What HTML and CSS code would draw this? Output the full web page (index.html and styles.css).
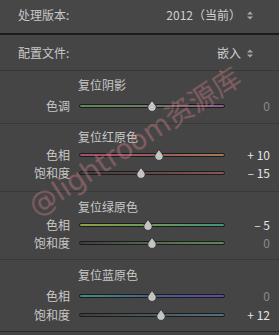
FILE: index.html
```html
<!DOCTYPE html>
<html>
<head>
<meta charset="utf-8">
<link rel="stylesheet" href="styles.css">
</head>
<body>
<div class="panel">
  <div class="row row-top">
    <span class="row-label">处理版本:</span>
    <span class="row-value">2012（当前）<svg class="updown" width="6" height="9" viewBox="0 0 6 9"><path d="M0 3.6 L3 0.4 L6 3.6 Z M0 5.4 L3 8.6 L6 5.4 Z"/></svg></span>
  </div>
  <div class="row row-profile">
    <span class="row-label">配置文件:</span>
    <span class="row-value">嵌入<svg class="updown" width="6" height="9" viewBox="0 0 6 9"><path d="M0 3.6 L3 0.4 L6 3.6 Z M0 5.4 L3 8.6 L6 5.4 Z"/></svg></span>
  </div>

  <div class="section s1">
    <div class="sec-title">复位阴影</div>
    <div class="slider">
      <span class="lbl">色调</span>
      <div class="track t-tone"><svg class="thumb" style="left:calc(50% - 5px)" width="10" height="11" viewBox="0 0 10 11"><path d="M5 0.5 L9 6 A4.2 4.2 0 1 1 1 6 Z"/></svg></div>
      <span class="val zero">0</span>
    </div>
  </div>

  <div class="section s2">
    <div class="sec-title">复位红原色</div>
    <div class="slider">
      <span class="lbl">色相</span>
      <div class="track t-rh"><svg class="thumb" style="left:calc(55% - 5px)" width="10" height="11" viewBox="0 0 10 11"><path d="M5 0.5 L9 6 A4.2 4.2 0 1 1 1 6 Z"/></svg></div>
      <span class="val">+ 10</span>
    </div>
    <div class="slider">
      <span class="lbl">饱和度</span>
      <div class="track t-rs"><svg class="thumb" style="left:calc(42.5% - 5px)" width="10" height="11" viewBox="0 0 10 11"><path d="M5 0.5 L9 6 A4.2 4.2 0 1 1 1 6 Z"/></svg></div>
      <span class="val">– 15</span>
    </div>
  </div>

  <div class="section s3">
    <div class="sec-title">复位绿原色</div>
    <div class="slider">
      <span class="lbl">色相</span>
      <div class="track t-gh"><svg class="thumb" style="left:calc(47.5% - 5px)" width="10" height="11" viewBox="0 0 10 11"><path d="M5 0.5 L9 6 A4.2 4.2 0 1 1 1 6 Z"/></svg></div>
      <span class="val">– 5</span>
    </div>
    <div class="slider">
      <span class="lbl">饱和度</span>
      <div class="track t-gs"><svg class="thumb" style="left:calc(50% - 5px)" width="10" height="11" viewBox="0 0 10 11"><path d="M5 0.5 L9 6 A4.2 4.2 0 1 1 1 6 Z"/></svg></div>
      <span class="val zero">0</span>
    </div>
  </div>

  <div class="section s4">
    <div class="sec-title">复位蓝原色</div>
    <div class="slider">
      <span class="lbl">色相</span>
      <div class="track t-bh"><svg class="thumb" style="left:calc(50% - 5px)" width="10" height="11" viewBox="0 0 10 11"><path d="M5 0.5 L9 6 A4.2 4.2 0 1 1 1 6 Z"/></svg></div>
      <span class="val zero">0</span>
    </div>
    <div class="slider">
      <span class="lbl">饱和度</span>
      <div class="track t-bs"><svg class="thumb" style="left:calc(56% - 5px)" width="10" height="11" viewBox="0 0 10 11"><path d="M5 0.5 L9 6 A4.2 4.2 0 1 1 1 6 Z"/></svg></div>
      <span class="val">+ 12</span>
    </div>
  </div>

  <div class="watermark">@lightroom资源库</div>
</div>
</body>
</html>
```
FILE: styles.css
```css
* { box-sizing: border-box; }
html, body {
  margin: 0;
  padding: 0;
  background: #454545;
}
body {
  width: 279px;
  height: 335px;
  overflow: hidden;
  font-family: "Noto Sans CJK SC", "Noto Sans", sans-serif;
  font-size: 12px;
  color: #c8c8c8;
}
.panel {
  position: relative;
  width: 279px;
  height: 335px;
  background: #454545;
}
.row {
  display: flex;
  align-items: center;
  justify-content: space-between;
  padding: 0 30px 0 18px;
  line-height: 18px;
}
.row-top {
  height: 35px;
  padding-bottom: 3px;
  border-bottom: 2px solid #1b1b1b;
  background: #474747;
}
.row-profile {
  height: 36px;
  padding-top: 1px;
  border-bottom: 1px solid #383838;
}
.row-value {
  display: flex;
  align-items: center;
  color: #d0d0d0;
  position: relative;
  right: -4px;
}
.updown {
  fill: #a8a8a8;
  margin-left: 6px;
}
.section {
  display: flex;
  flex-direction: column;
  border-bottom: 1px solid #383838;
}
.s1 { height: 53px; padding-top: 5px; }
.s2 { height: 68px; padding-top: 4px; }
.s3 { height: 68px; padding-top: 6px; }
.s4 { height: 72px; padding-top: 6px; border-bottom: 1px solid #2a2a2a; }
.sec-title {
  height: 18px;
  line-height: 18px;
  padding-left: 78px;
  color: #c8c8c8;
}
.slider {
  display: flex;
  align-items: center;
  height: 18px;
  line-height: 18px;
}
.s1 .slider { margin-top: 3px; }
.s3 .slider:first-of-type { margin-top: 1px; }
.s4 .slider { height: 19px; }
.s4 .sec-title + .slider { margin-top: 2px; }
.lbl {
  width: 70px;
  text-align: right;
  color: #c8c8c8;
}
.track {
  position: relative;
  margin-left: 9px;
  width: 146px;
  height: 4px;
  border: 1px solid #1c1c1c;
  border-radius: 2px;
}
.thumb {
  position: absolute;
  top: -5px;
  fill: #c4c4c4;
  stroke: #2a2a2a;
  stroke-width: 0.8;
}
.val {
  flex: 1;
  text-align: right;
  padding-right: 9px;
  color: #e4e4e4;
  white-space: pre;
}
.val.zero { color: #8a8a8a; }

.t-tone { background: linear-gradient(90deg, #5e8a58, #6f7a66 50%, #8c5c8c); }
.t-rh { background: linear-gradient(90deg, #a0506e, #9a5a62 50%, #a07a55); }
.t-rs { background: linear-gradient(90deg, #3e3e3e, #6a4a4a 60%, #8a5552); }
.t-gh { background: linear-gradient(90deg, #8ea048, #6a9a58 50%, #43907e); }
.t-gs { background: linear-gradient(90deg, #3e3e3e, #56704e 60%, #5c8a58); }
.t-bh { background: linear-gradient(90deg, #3f9082, #4a5e8c 50%, #5c4ca0); }
.t-bs { background: linear-gradient(90deg, #3e3e3e, #4c5e66 60%, #557080); }

.watermark {
  position: absolute;
  left: 40px;
  top: 192px;
  font-family: "DejaVu Sans", "Noto Sans CJK SC", sans-serif;
  font-size: 28px;
  line-height: 30px;
  white-space: nowrap;
  color: rgba(215, 115, 125, 0.2);
  text-shadow: 0 0 1px rgba(230, 150, 160, 0.25);
  transform-origin: 0 100%;
  transform: rotate(-33deg);
  pointer-events: none;
}
```
